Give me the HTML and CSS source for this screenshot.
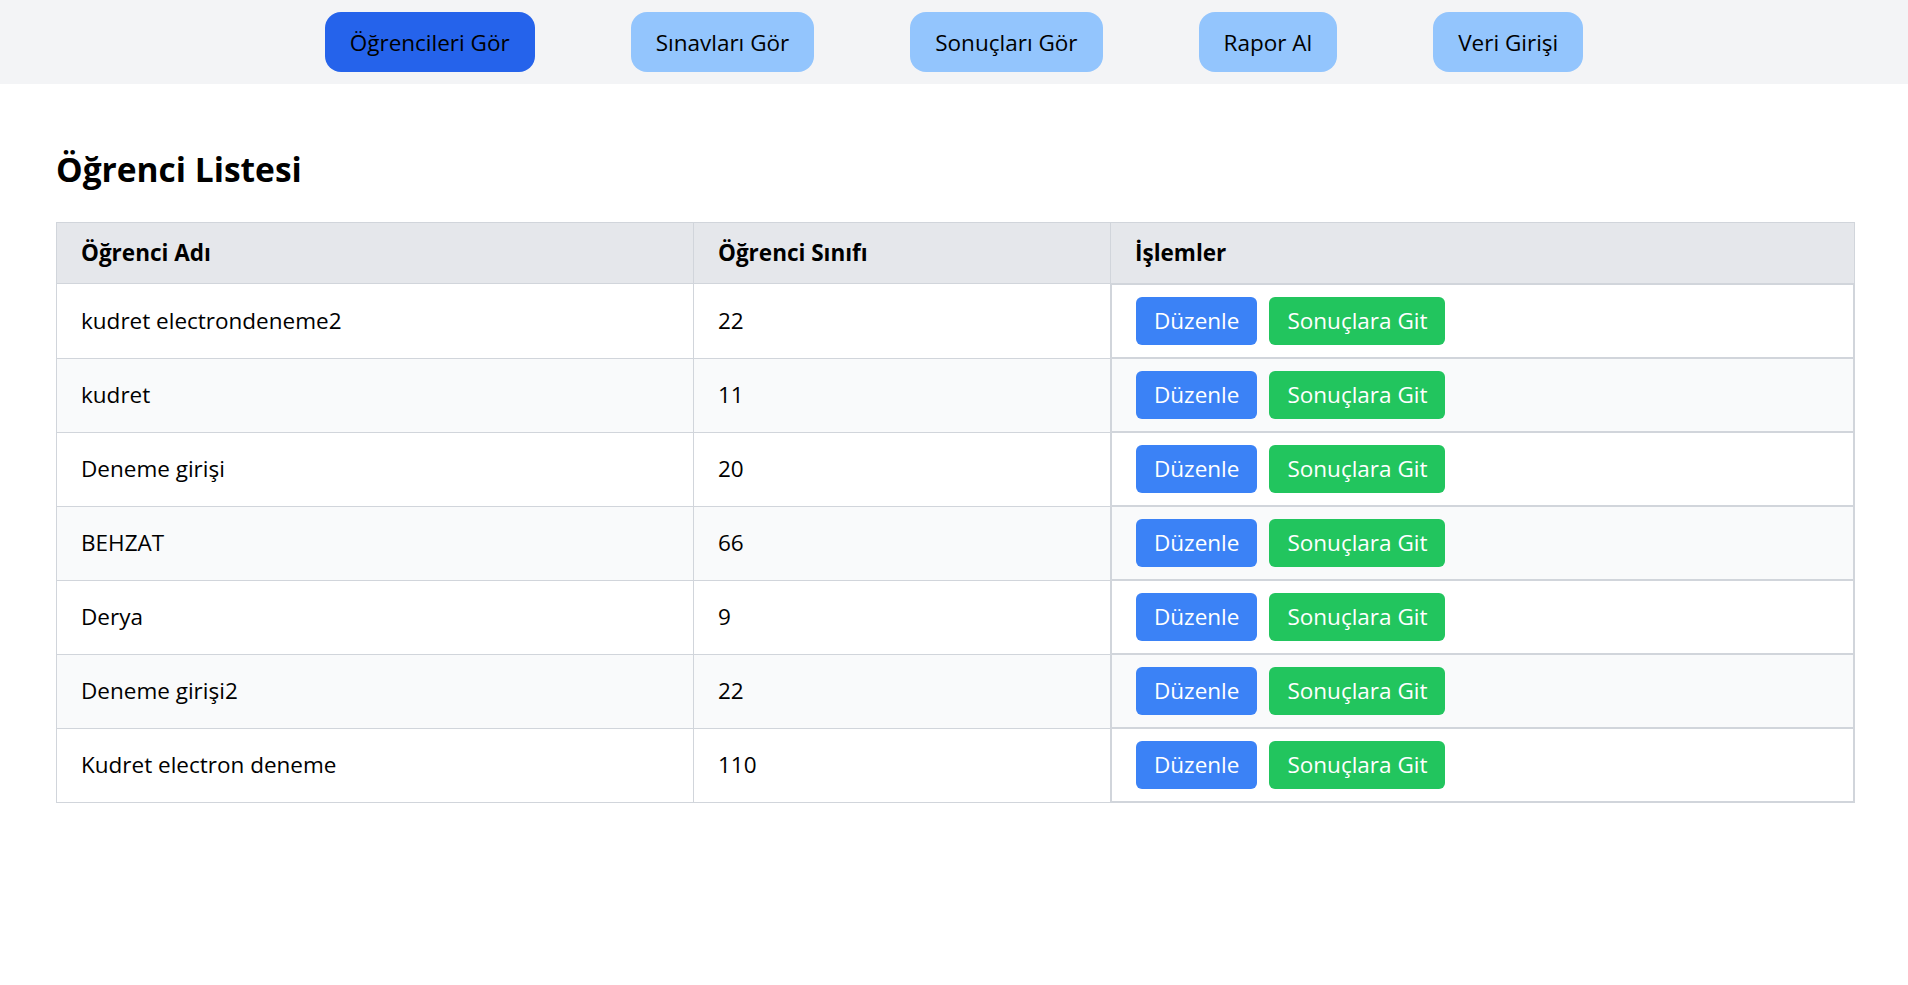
FILE: index.html
```html
<!DOCTYPE html>
<html lang="tr">
<head>
<meta charset="utf-8">
<title>Öğrenci Listesi</title>
<link rel="stylesheet" href="styles.css">
</head>
<body>
<nav class="topnav">
  <button class="nav-btn active">Öğrencileri Gör</button>
  <button class="nav-btn">Sınavları Gör</button>
  <button class="nav-btn">Sonuçları Gör</button>
  <button class="nav-btn">Rapor Al</button>
  <button class="nav-btn">Veri Girişi</button>
</nav>
<main class="content">
  <h1 class="title">Öğrenci Listesi</h1>
  <table class="students">
    <colgroup>
      <col class="c-name">
      <col class="c-class">
      <col class="c-actions">
    </colgroup>
    <thead>
      <tr>
        <th>Öğrenci Adı</th>
        <th>Öğrenci Sınıfı</th>
        <th>İşlemler</th>
      </tr>
    </thead>
    <tbody>
      <tr>
        <td>kudret electrondeneme2</td>
        <td>22</td>
        <td class="actions"><button class="btn edit">Düzenle</button><button class="btn go">Sonuçlara Git</button></td>
      </tr>
      <tr>
        <td>kudret</td>
        <td>11</td>
        <td class="actions"><button class="btn edit">Düzenle</button><button class="btn go">Sonuçlara Git</button></td>
      </tr>
      <tr>
        <td>Deneme girişi</td>
        <td>20</td>
        <td class="actions"><button class="btn edit">Düzenle</button><button class="btn go">Sonuçlara Git</button></td>
      </tr>
      <tr>
        <td>BEHZAT</td>
        <td>66</td>
        <td class="actions"><button class="btn edit">Düzenle</button><button class="btn go">Sonuçlara Git</button></td>
      </tr>
      <tr>
        <td>Derya</td>
        <td>9</td>
        <td class="actions"><button class="btn edit">Düzenle</button><button class="btn go">Sonuçlara Git</button></td>
      </tr>
      <tr>
        <td>Deneme girişi2</td>
        <td>22</td>
        <td class="actions"><button class="btn edit">Düzenle</button><button class="btn go">Sonuçlara Git</button></td>
      </tr>
      <tr>
        <td>Kudret electron deneme</td>
        <td>110</td>
        <td class="actions"><button class="btn edit">Düzenle</button><button class="btn go">Sonuçlara Git</button></td>
      </tr>
    </tbody>
  </table>
</main>
</body>
</html>
```

FILE: styles.css
```css
* {
  box-sizing: border-box;
}

html, body {
  margin: 0;
  padding: 0;
  background: #ffffff;
  color: #000000;
  font-family: "Open Sans", "Noto Sans", "Liberation Sans", sans-serif;
  font-size: 22.5px;
  line-height: 36px;
}

button {
  font-family: inherit;
  font-size: inherit;
  line-height: inherit;
  border: 0;
  margin: 0;
  cursor: pointer;
}

.topnav {
  display: flex;
  justify-content: center;
  align-items: center;
  gap: 96px;
  height: 84px;
  padding: 12px 0;
  background: #f3f4f6;
}

.nav-btn {
  height: 60px;
  padding: 13px 25px 11px 25px;
  border-radius: 16px;
  background: #93c5fd;
  color: #000000;
}

.nav-btn.active {
  background: #2563eb;
}

.content {
  padding: 61px 53px 0 56px;
}

.title {
  margin: 0 0 29px 0;
  font-size: 33.5px;
  line-height: 48px;
  font-weight: 700;
}

.students {
  width: 100%;
  border-collapse: collapse;
  table-layout: fixed;
  border: 1px solid #d1d5db;
}

.c-name { width: 637px; }
.c-class { width: 417px; }
.c-actions { width: auto; }

.students th,
.students td {
  border: 1px solid #d1d5db;
  padding: 12px 24px;
  text-align: left;
  vertical-align: middle;
}

.students th {
  background: #e5e7eb;
  font-weight: 700;
}

.students tbody tr:nth-child(even) {
  background: #f9fafb;
}

.students td.actions {
  display: flex;
  gap: 12px;
  padding: 12px 24px;
}

.btn {
  height: 48px;
  padding: 6px 18px;
  border-radius: 6px;
  color: #ffffff;
}

.btn.edit {
  background: #3b82f6;
}

.btn.go {
  background: #22c55e;
}
```
